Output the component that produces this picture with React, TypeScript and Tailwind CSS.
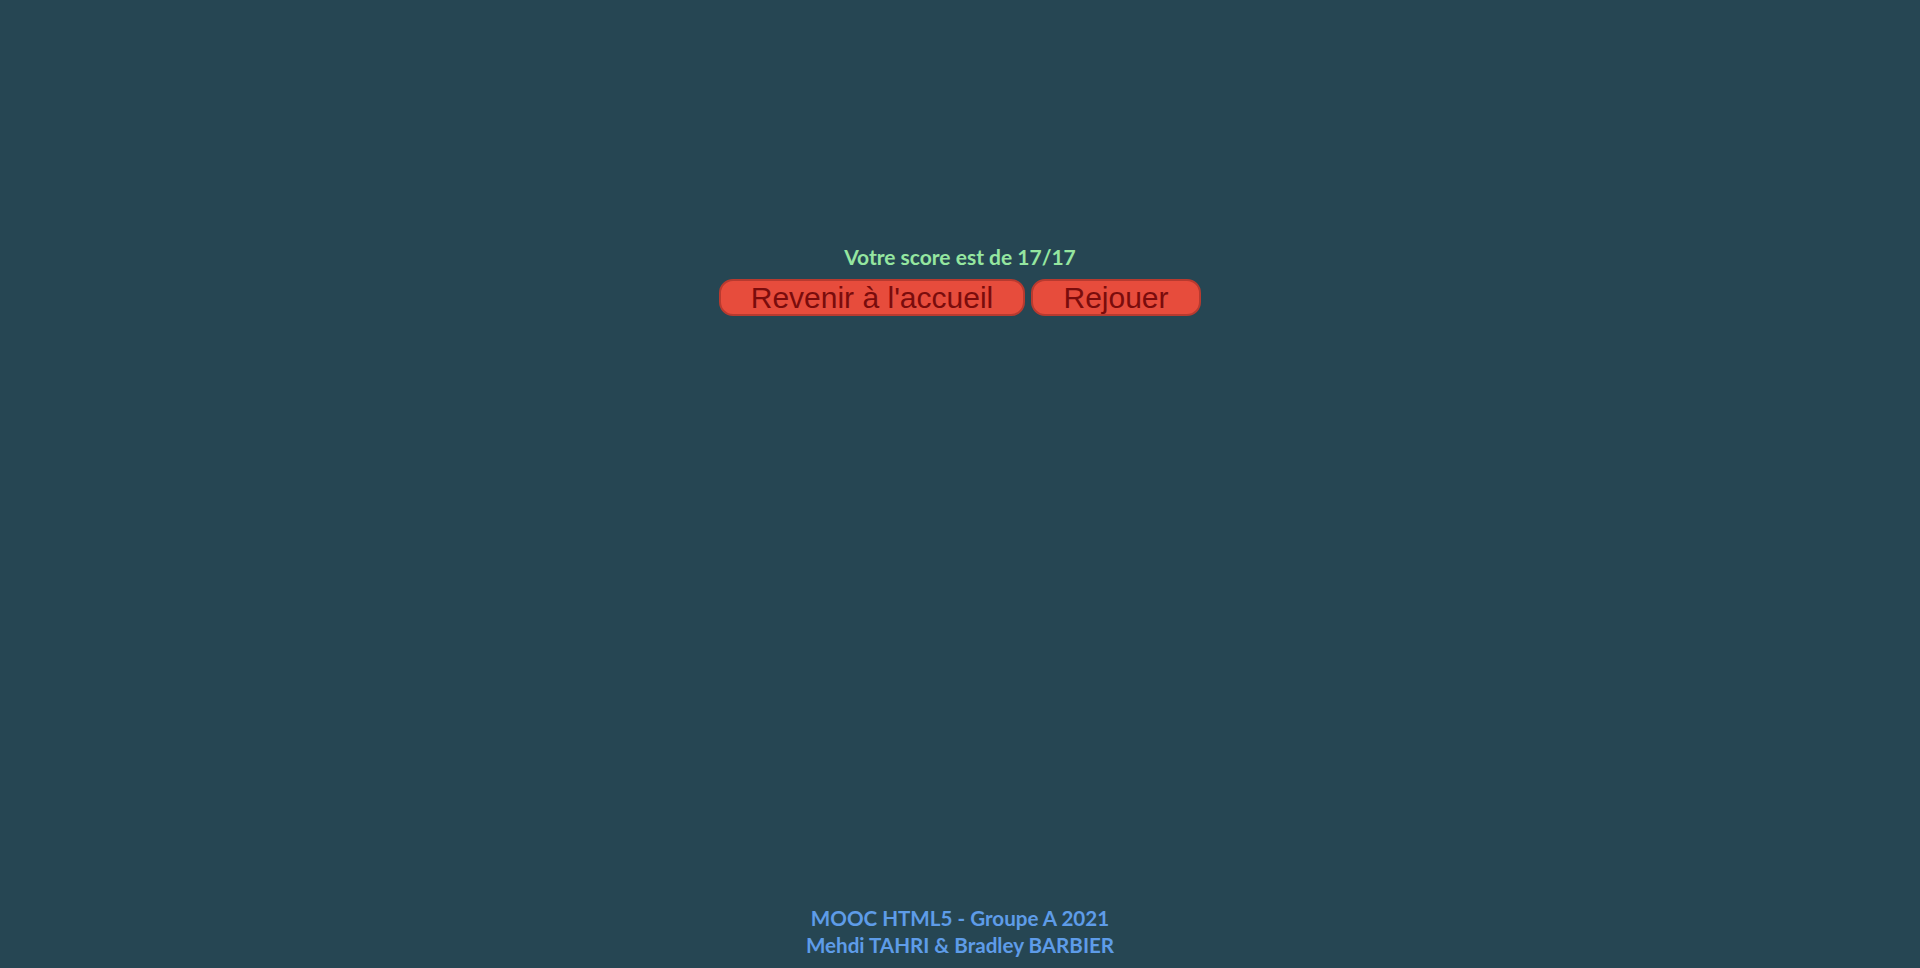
import React from "react";

const App: React.FC = () => {
    return (
        <div className="min-h-screen w-full bg-[#264653] flex flex-col items-center font-['Lato',sans-serif]">
            <main className="flex flex-col items-center pt-[244px] flex-1">
                <p className="text-[21px] leading-[25px] font-bold text-[#95e6a0]">Votre score est de 17/17</p>
                <div className="flex gap-[6px] mt-[10px]">
                    <button className="h-[37px] w-[306px] rounded-[14px] border-2 border-[#b83a2f] bg-[#e74c3c] text-[#7a0c0c] font-['Liberation_Sans',Arial,sans-serif] text-[30px] leading-none">
                        Revenir à l'accueil
                    </button>
                    <button className="h-[37px] w-[170px] rounded-[14px] border-2 border-[#b83a2f] bg-[#e74c3c] text-[#7a0c0c] font-['Liberation_Sans',Arial,sans-serif] text-[30px] leading-none">
                        Rejouer
                    </button>
                </div>
            </main>
            <footer className="flex flex-col items-center pb-[9px] text-[20.6px] leading-[27px] font-bold text-[#5e9ce8]">
                <span>MOOC HTML5 - Groupe A 2021</span>
                <span>Mehdi TAHRI &amp; Bradley BARBIER</span>
            </footer>
        </div>
    );
};

export default App;
